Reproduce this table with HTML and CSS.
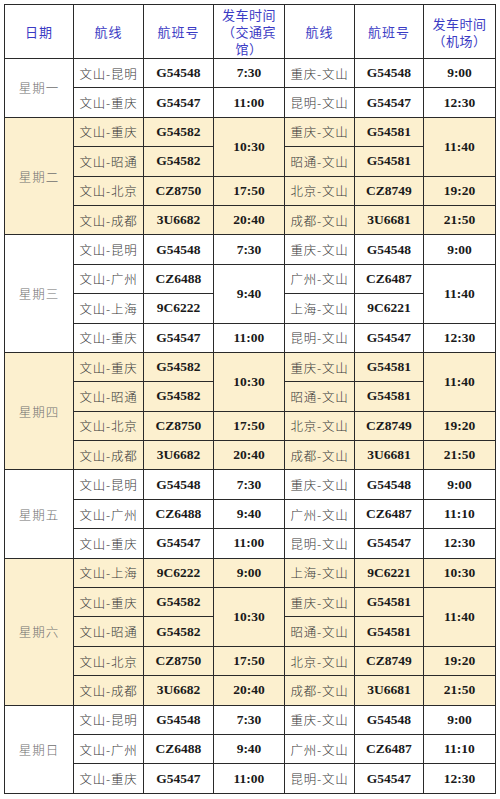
FILE: index.html
```html
<!DOCTYPE html>
<html lang="zh">
<head>
<meta charset="utf-8">
<link rel="stylesheet" href="styles.css">
</head>
<body>
<table class="sched">
<colgroup>
<col class="c1"><col class="c2"><col class="c3"><col class="c4"><col class="c5"><col class="c6"><col class="c7">
</colgroup>
<thead>
<tr class="head">
<th>日期</th><th>航线</th><th>航班号</th><th class="wrap">发车时间（交通宾馆）</th><th>航线</th><th>航班号</th><th class="wrap">发车时间（机场）</th>
</tr>
</thead>
<tbody>
<tr><td class="day" rowspan="2">星期一</td><td class="rt">文山-昆明</td><td class="fn">G54548</td><td class="tm">7:30</td><td class="rt">重庆-文山</td><td class="fn">G54548</td><td class="tm">9:00</td></tr>
<tr><td class="rt">文山-重庆</td><td class="fn">G54547</td><td class="tm">11:00</td><td class="rt">昆明-文山</td><td class="fn">G54547</td><td class="tm">12:30</td></tr>
</tbody>
<tbody class="y">
<tr><td class="day" rowspan="4">星期二</td><td class="rt">文山-重庆</td><td class="fn">G54582</td><td class="tm" rowspan="2">10:30</td><td class="rt">重庆-文山</td><td class="fn">G54581</td><td class="tm" rowspan="2">11:40</td></tr>
<tr><td class="rt">文山-昭通</td><td class="fn">G54582</td><td class="rt">昭通-文山</td><td class="fn">G54581</td></tr>
<tr><td class="rt">文山-北京</td><td class="fn">CZ8750</td><td class="tm">17:50</td><td class="rt">北京-文山</td><td class="fn">CZ8749</td><td class="tm">19:20</td></tr>
<tr><td class="rt">文山-成都</td><td class="fn">3U6682</td><td class="tm">20:40</td><td class="rt">成都-文山</td><td class="fn">3U6681</td><td class="tm">21:50</td></tr>
</tbody>
<tbody>
<tr><td class="day" rowspan="4">星期三</td><td class="rt">文山-昆明</td><td class="fn">G54548</td><td class="tm">7:30</td><td class="rt">重庆-文山</td><td class="fn">G54548</td><td class="tm">9:00</td></tr>
<tr><td class="rt">文山-广州</td><td class="fn">CZ6488</td><td class="tm" rowspan="2">9:40</td><td class="rt">广州-文山</td><td class="fn">CZ6487</td><td class="tm" rowspan="2">11:40</td></tr>
<tr><td class="rt">文山-上海</td><td class="fn">9C6222</td><td class="rt">上海-文山</td><td class="fn">9C6221</td></tr>
<tr><td class="rt">文山-重庆</td><td class="fn">G54547</td><td class="tm">11:00</td><td class="rt">昆明-文山</td><td class="fn">G54547</td><td class="tm">12:30</td></tr>
</tbody>
<tbody class="y">
<tr><td class="day" rowspan="4">星期四</td><td class="rt">文山-重庆</td><td class="fn">G54582</td><td class="tm" rowspan="2">10:30</td><td class="rt">重庆-文山</td><td class="fn">G54581</td><td class="tm" rowspan="2">11:40</td></tr>
<tr><td class="rt">文山-昭通</td><td class="fn">G54582</td><td class="rt">昭通-文山</td><td class="fn">G54581</td></tr>
<tr><td class="rt">文山-北京</td><td class="fn">CZ8750</td><td class="tm">17:50</td><td class="rt">北京-文山</td><td class="fn">CZ8749</td><td class="tm">19:20</td></tr>
<tr><td class="rt">文山-成都</td><td class="fn">3U6682</td><td class="tm">20:40</td><td class="rt">成都-文山</td><td class="fn">3U6681</td><td class="tm">21:50</td></tr>
</tbody>
<tbody>
<tr><td class="day" rowspan="3">星期五</td><td class="rt">文山-昆明</td><td class="fn">G54548</td><td class="tm">7:30</td><td class="rt">重庆-文山</td><td class="fn">G54548</td><td class="tm">9:00</td></tr>
<tr><td class="rt">文山-广州</td><td class="fn">CZ6488</td><td class="tm">9:40</td><td class="rt">广州-文山</td><td class="fn">CZ6487</td><td class="tm">11:10</td></tr>
<tr><td class="rt">文山-重庆</td><td class="fn">G54547</td><td class="tm">11:00</td><td class="rt">昆明-文山</td><td class="fn">G54547</td><td class="tm">12:30</td></tr>
</tbody>
<tbody class="y">
<tr><td class="day" rowspan="5">星期六</td><td class="rt">文山-上海</td><td class="fn">9C6222</td><td class="tm">9:00</td><td class="rt">上海-文山</td><td class="fn">9C6221</td><td class="tm">10:30</td></tr>
<tr><td class="rt">文山-重庆</td><td class="fn">G54582</td><td class="tm" rowspan="2">10:30</td><td class="rt">重庆-文山</td><td class="fn">G54581</td><td class="tm" rowspan="2">11:40</td></tr>
<tr><td class="rt">文山-昭通</td><td class="fn">G54582</td><td class="rt">昭通-文山</td><td class="fn">G54581</td></tr>
<tr><td class="rt">文山-北京</td><td class="fn">CZ8750</td><td class="tm">17:50</td><td class="rt">北京-文山</td><td class="fn">CZ8749</td><td class="tm">19:20</td></tr>
<tr><td class="rt">文山-成都</td><td class="fn">3U6682</td><td class="tm">20:40</td><td class="rt">成都-文山</td><td class="fn">3U6681</td><td class="tm">21:50</td></tr>
</tbody>
<tbody>
<tr><td class="day" rowspan="3">星期日</td><td class="rt">文山-昆明</td><td class="fn">G54548</td><td class="tm">7:30</td><td class="rt">重庆-文山</td><td class="fn">G54548</td><td class="tm">9:00</td></tr>
<tr><td class="rt">文山-广州</td><td class="fn">CZ6488</td><td class="tm">9:40</td><td class="rt">广州-文山</td><td class="fn">CZ6487</td><td class="tm">11:10</td></tr>
<tr><td class="rt">文山-重庆</td><td class="fn">G54547</td><td class="tm">11:00</td><td class="rt">昆明-文山</td><td class="fn">G54547</td><td class="tm">12:30</td></tr>
</tbody>
</table>
</body>
</html>
```
FILE: styles.css
```css
html, body {
  margin: 0;
  padding: 0;
  background: #ffffff;
}
body {
  padding: 4px 0 0 4px;
  font-family: "Noto Sans CJK SC", "Liberation Serif", serif;
}
.sched {
  border-collapse: collapse;
  table-layout: fixed;
  width: 491px;
  border: 1.5px solid #222;
}
.c1 { width: 69px; }
.c2 { width: 70px; }
.c3 { width: 70px; }
.c4 { width: 71px; }
.c5 { width: 70px; }
.c6 { width: 69px; }
.c7 { width: 72px; }
.sched th,
.sched td {
  border: 1px solid #2a2a2a;
  text-align: center;
  vertical-align: middle;
  padding: 0;
}
.head {
  height: 54px;
}
.sched th {
  font-weight: normal;
  color: #3b3bc4;
  font-size: 13px;
  line-height: 17px;
  letter-spacing: 1px;
  font-family: "Noto Sans CJK SC", sans-serif;
}
.sched th.wrap {
  padding: 0 5px;
  letter-spacing: 0.5px;
}
.sched tbody tr {
  height: 29.4px;
}
.y td {
  background: #fcf0cf;
}
.day {
  color: #707070;
  font-size: 12.5px;
  font-weight: 300;
  letter-spacing: 1px;
  font-family: "Noto Sans CJK SC", sans-serif;
}
.rt {
  color: #383838;
  font-size: 12.5px;
  font-weight: 300;
  letter-spacing: 0.8px;
  font-family: "Noto Sans CJK SC", sans-serif;
}
.fn,
.tm {
  font-family: "Liberation Serif", "Times New Roman", serif;
  font-weight: bold;
  font-size: 13.5px;
  color: #1a1a1a;
}
```
